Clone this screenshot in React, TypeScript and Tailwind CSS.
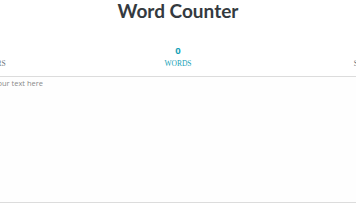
import React from "react";

const Stat = ({ n, label, active }: { n: string; label: string; active?: boolean }) => (
  <div className="flex-1 flex flex-col items-center">
    <div
      className={`text-[9.5px] font-bold leading-[10px] ${active ? "text-[#17a2b8]" : "text-[#6c757d]"}`}
      style={{ fontFamily: '"Open Sans", sans-serif' }}
    >
      {n}
    </div>
    <div
      className={`mt-[3px] text-[7.5px] leading-[10px] ${active ? "text-[#17a2b8]" : "text-[#6c757d]"}`}
      style={{ fontFamily: '"Liberation Serif", serif' }}
    >
      {label}
    </div>
  </div>
);

export default function App() {
  return (
    <div className="w-[356px] h-[220px] overflow-hidden bg-white">
      <h1
        className="text-center text-[19px] font-bold leading-[22px] text-[#343a40]"
        style={{ fontFamily: 'Lato, sans-serif' }}
      >
        Word Counter
      </h1>
      <div className="flex justify-center mt-[24px]">
        <div className="w-[591px] shrink-0 flex">
          <Stat n="0" label="CHARACTERS" />
          <Stat n="0" label="WORDS" active />
          <Stat n="0" label="SENTENCES" />
        </div>
      </div>
      <div className="flex justify-center mt-[7px]">
        <textarea
          readOnly
          placeholder="Enter your text here"
          className="w-[420px] shrink-0 h-[127px] resize-none border-t-[1.5px] border-b-[1.5px] border-[#dcdcdc] bg-[#fefefe] px-[5px] pt-[1px] text-[7.5px] leading-[10px] text-[#555] placeholder:text-[#8a8a8a] outline-none"
          style={{ fontFamily: '"Open Sans", sans-serif' }}
        />
      </div>
    </div>
  );
}
